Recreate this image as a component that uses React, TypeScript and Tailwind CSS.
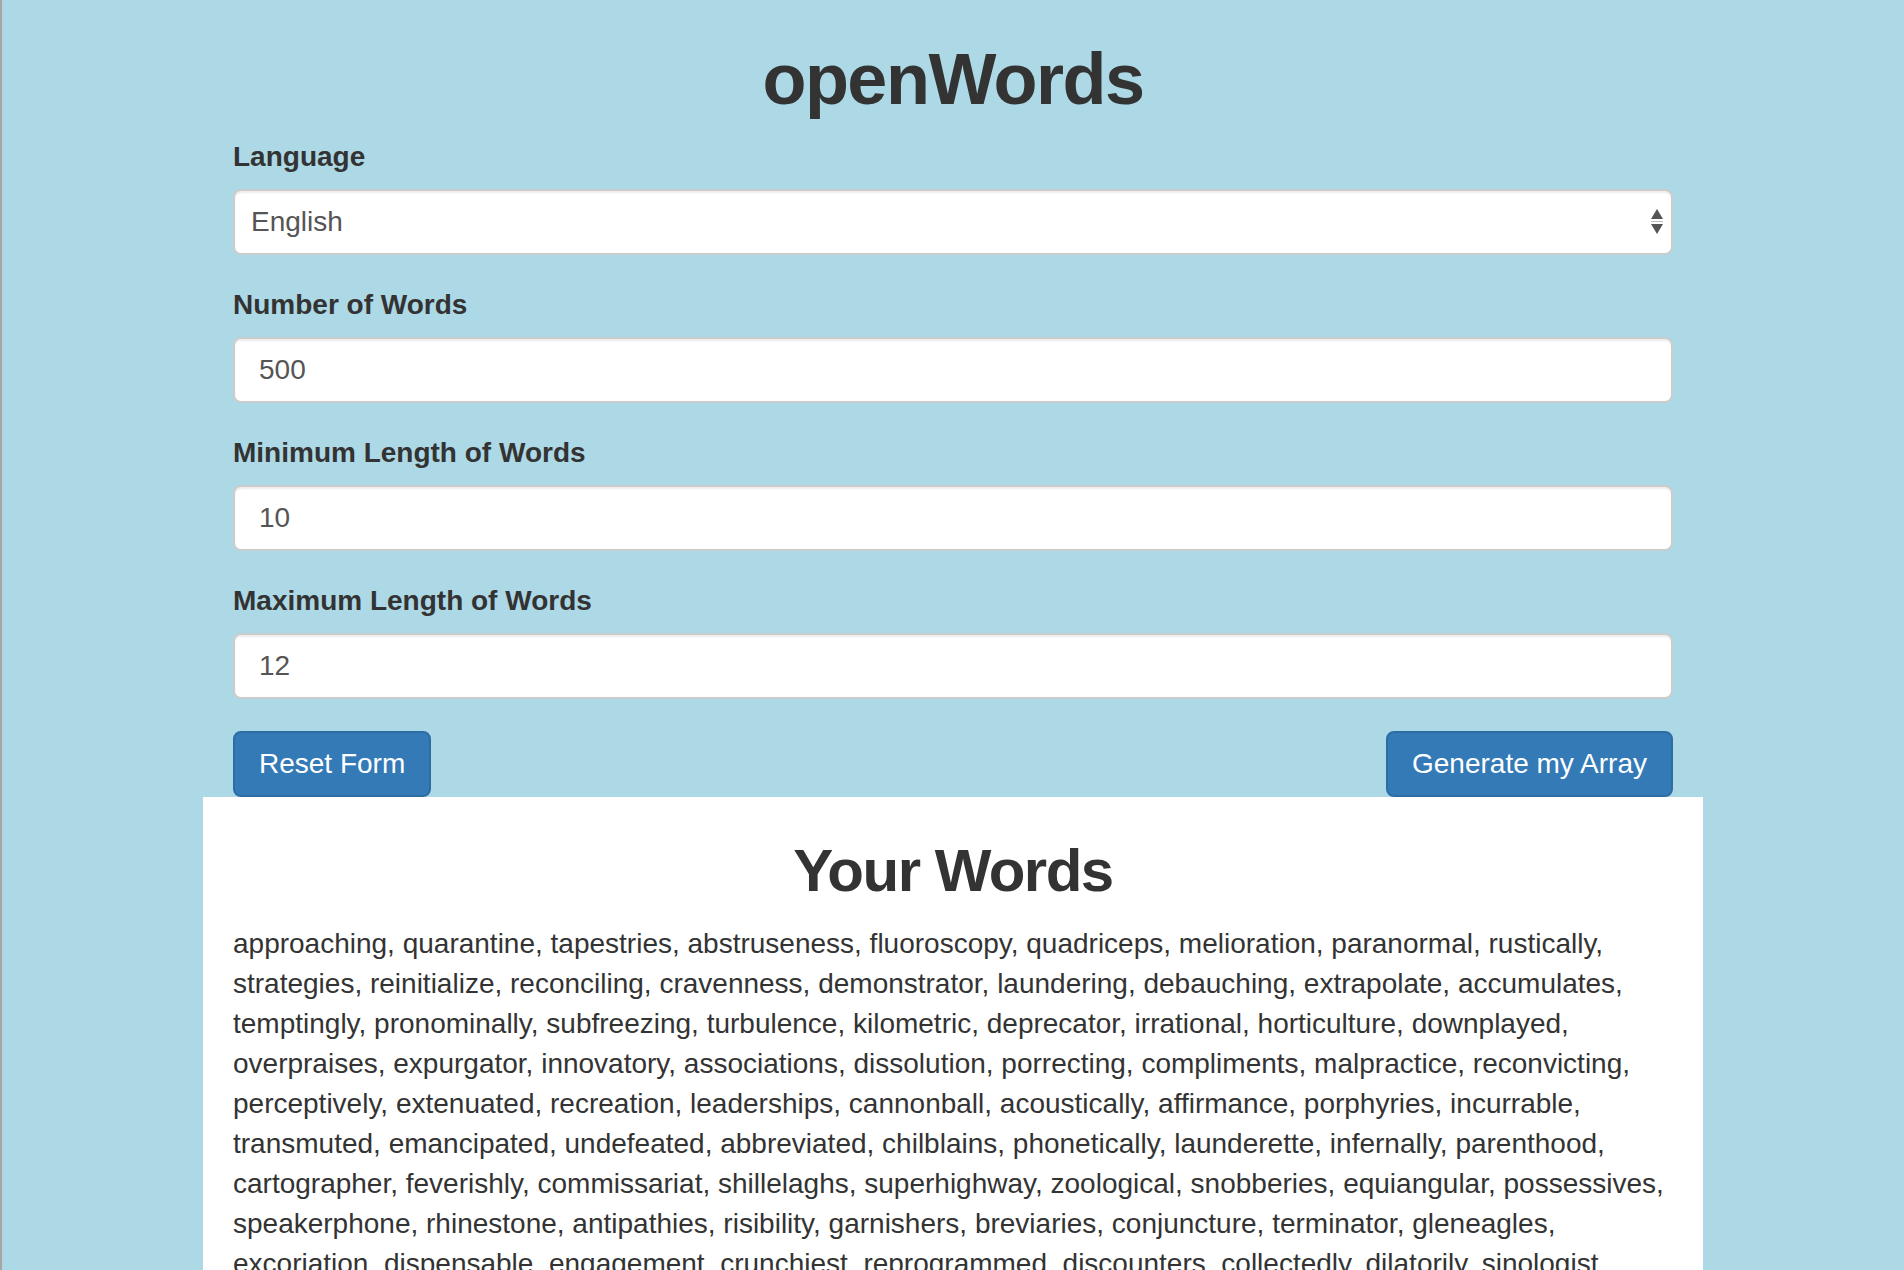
import { useState } from "react";

const WORDS =
  "approaching, quarantine, tapestries, abstruseness, fluoroscopy, quadriceps, melioration, paranormal, rustically, " +
  "strategies, reinitialize, reconciling, cravenness, demonstrator, laundering, debauching, extrapolate, accumulates, " +
  "temptingly, pronominally, subfreezing, turbulence, kilometric, deprecator, irrational, horticulture, downplayed, " +
  "overpraises, expurgator, innovatory, associations, dissolution, porrecting, compliments, malpractice, reconvicting, " +
  "perceptively, extenuated, recreation, leaderships, cannonball, acoustically, affirmance, porphyries, incurrable, " +
  "transmuted, emancipated, undefeated, abbreviated, chilblains, phonetically, launderette, infernally, parenthood, " +
  "cartographer, feverishly, commissariat, shillelaghs, superhighway, zoological, snobberies, equiangular, possessives, " +
  "speakerphone, rhinestone, antipathies, risibility, garnishers, breviaries, conjuncture, terminator, gleneagles, " +
  "excoriation, dispensable, engagement, crunchiest, reprogrammed, discounters, collectedly, dilatorily, sinologist, " +
  "hemispheres, categorical, mountaineer, reassembled, overwhelming, undeniable, grandmother, nightingale, " +
  "subcontract, interlocked, blasphemous, ventriloquy, restatement, cheerleader, embroidered, perspective";

const inputCls =
  "block w-full h-[66px] rounded-[8px] border-2 border-[#cccccc] bg-white px-[24px] py-[11px] text-[28px] leading-[40px] text-[#555555] shadow-[inset_0_2px_2px_rgba(0,0,0,0.075)] outline-none";

function Field({ label, value }: { label: string; value: string }) {
  return (
    <div className="mb-[30px]">
      <label className="block mb-[12px] text-[28px] leading-[40px] font-bold">{label}</label>
      <input type="text" defaultValue={value} className={inputCls} />
    </div>
  );
}

export default function App() {
  const [lang, setLang] = useState("English");

  return (
    <div className="min-h-screen bg-[#add8e6] border-l-2 border-[#a6a6a6] font-['Liberation_Sans',Arial,sans-serif] text-[#333333]">
      <div className="mx-auto w-[1500px] px-[30px]">
        <h1 className="pt-[40px] mb-[18px] text-center text-[72px] leading-[79px] font-bold tracking-[-1.5px]">
          openWords
        </h1>

        {/* Language select */}
        <div className="mb-[30px]">
          <label className="block mb-[12px] text-[28px] leading-[40px] font-bold">Language</label>
          <div className="relative">
            <select
              value={lang}
              onChange={(e) => setLang(e.target.value)}
              className="block w-full h-[66px] appearance-none rounded-[8px] border-2 border-[#cccccc] bg-white pl-[16px] pr-[40px] text-[28px] leading-[40px] text-[#555555] shadow-[inset_0_2px_2px_rgba(0,0,0,0.075)] outline-none"
            >
              <option>English</option>
              <option>Spanish</option>
              <option>French</option>
              <option>German</option>
            </select>
            <svg
              className="pointer-events-none absolute right-[10px] top-[20px]"
              width="12"
              height="26"
              viewBox="0 0 12 26"
            >
              <polygon points="0,10 6,0 12,10" fill="#555555" />
              <rect x="0" y="12" width="12" height="1" fill="#bbbbbb" />
              <polygon points="0,15 12,15 6,25" fill="#555555" />
            </svg>
          </div>
        </div>

        <Field label="Number of Words" value="500" />
        <Field label="Minimum Length of Words" value="10" />
        <Field label="Maximum Length of Words" value="12" />

        <div className="flex justify-between pt-[2px]">
          <button className="rounded-[8px] border-2 border-[#2e6da4] bg-[#337ab7] px-[24px] py-[11px] text-[28px] leading-[40px] text-white">
            Reset Form
          </button>
          <button className="rounded-[8px] border-2 border-[#2e6da4] bg-[#337ab7] px-[24px] py-[11px] text-[28px] leading-[40px] text-white">
            Generate my Array
          </button>
        </div>
      </div>

      {/* Results */}
      <div className="mx-auto w-[1500px] bg-white px-[30px] pt-[41px] pb-[40px]">
        <h2 className="mb-[20px] text-center text-[60px] leading-[66px] font-bold tracking-[-1.5px]">Your Words</h2>
        <p className="text-[28px] leading-[40px]">{WORDS}</p>
      </div>
    </div>
  );
}
